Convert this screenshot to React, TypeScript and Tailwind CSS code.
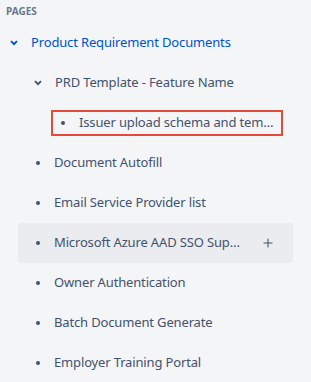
import { Plus } from "lucide-react";

type Page = { title: string; hovered?: boolean };

const pages: Page[] = [
  { title: "Document Autofill" },
  { title: "Email Service Provider list" },
  { title: "Microsoft Azure AAD SSO Support Configuration", hovered: true },
  { title: "Owner Authentication" },
  { title: "Batch Document Generate" },
  { title: "Employer Training Portal" },
];

function Chevron() {
  return (
    <svg width="8" height="6" viewBox="0 0 8 6" className="shrink-0">
      <path d="M1 1.2 L4 4.2 L7 1.2" fill="none" stroke="currentColor" strokeWidth="1.9" />
    </svg>
  );
}

function Bullet() {
  return <span className="h-[4px] w-[4px] shrink-0 rounded-full bg-[#42526e]" />;
}

export default function App() {
  return (
    <div
      className="h-[382px] w-[311px] overflow-hidden bg-[#f4f5f7] text-[13px] tracking-[-0.15px] text-[#42526e]"
      style={{ fontFamily: '"Noto Sans", "Liberation Sans", sans-serif' }}
    >
      <div className="flex h-[22px] items-center pl-[6px] text-[10px] font-bold tracking-normal text-[#6b778c]">
        PAGES
      </div>

      <div className="mt-[1px] flex h-[40px] items-center pl-[10px] text-[#0052cc]">
        <Chevron />
        <span className="ml-[13px] truncate">Product Requirement Documents</span>
      </div>

      <div className="flex h-[40px] items-center pl-[34px]">
        <Chevron />
        <span className="ml-[13px] truncate">PRD Template - Feature Name</span>
      </div>

      <div className="flex h-[40px] items-center">
        <div className="ml-[51px] flex h-[26px] w-[232px] items-center border-2 border-[#e5493a] pl-[8px] pr-[4px]">
          <Bullet />
          <span className="ml-[14px] truncate">Issuer upload schema and template</span>
        </div>
      </div>

      {pages.map((page) => (
        <div
          key={page.title}
          className={
            page.hovered
              ? "mx-[18px] flex h-[40px] items-center rounded-[3px] bg-[#ebecf0] pl-[18px] pr-[18px]"
              : "mx-[18px] flex h-[40px] items-center pl-[18px] pr-[18px]"
          }
        >
          <Bullet />
          <span className="ml-[14px] min-w-0 flex-1 truncate">{page.title}</span>
          {page.hovered ? <Plus size={14} strokeWidth={1.8} className="ml-[16px] shrink-0" /> : null}
        </div>
      ))}
    </div>
  );
}
